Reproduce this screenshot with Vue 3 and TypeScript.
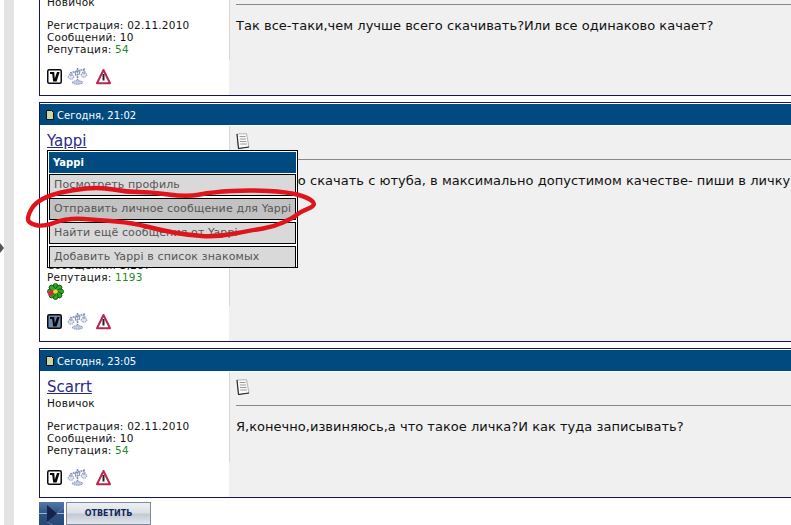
<script setup lang="ts">
interface Post {
  date: string
  name: string
  rank: string
  reg: string
  count: string
  rep: string
  text: string
  icq: boolean
  dark: boolean
}

const posts: Post[] = [
  { date: 'Сегодня, 20:47', name: 'Scarrt', rank: 'Новичок', reg: '02.11.2010', count: '10', rep: '54', text: 'Так все-таки,чем лучше всего скачивать?Или все одинаково качает?', icq: false, dark: false },
  { date: 'Сегодня, 21:02', name: 'Yappi', rank: 'Профи', reg: '14.03.2007', count: '3,287', rep: '1193', text: 'Если надо скачать с ютуба, в максимально допустимом качестве- пиши в личку', icq: true, dark: true },
  { date: 'Сегодня, 23:05', name: 'Scarrt', rank: 'Новичок', reg: '02.11.2010', count: '10', rep: '54', text: 'Я,конечно,извиняюсь,а что такое личка?И как туда записывать?', icq: false, dark: false },
]

const menu = [
  { label: 'Посмотреть профиль', active: false },
  { label: 'Отправить личное сообщение для Yappi', active: true },
  { label: 'Найти ещё сообщения от Yappi', active: false },
  { label: 'Добавить Yappi в список знакомых', active: false },
]

const loop: [number, number][] = [
  [72, 14], [100, 11], [127, 16], [150, 16], [187, 21], [213, 16], [250, 14], [287, 16],
  [307, 21], [317, 29], [300, 36], [293, 42], [273, 51], [253, 54], [217, 61], [187, 59],
  [160, 54], [133, 47], [100, 44], [67, 42], [43, 51], [28, 47], [28, 39], [35, 27], [50, 19],
]

function smooth(points: [number, number][]): string {
  const mid = (a: [number, number], b: [number, number]) => `${(a[0] + b[0]) / 2} ${(a[1] + b[1]) / 2}`
  let d = `M${mid(points[points.length - 1], points[0])}`
  points.forEach((p, i) => {
    d += `Q${p[0]} ${p[1]} ${mid(p, points[(i + 1) % points.length])}`
  })
  return d + 'Z'
}

const loopPath = smooth(loop)
</script>

<template>
  <div class="page">
    <div class="gutter"><span class="arrow"></span></div>
    <main class="thread">
      <article v-for="(p, i) in posts" :key="i" class="post" :class="'post' + i">
        <header class="post-head">
          <svg class="note" width="8" height="10" viewBox="0 0 8 10">
            <path d="M.5.5H5.5L7.5 2.5V9.5H.5Z" fill="#c6d6a4" stroke="#111" />
          </svg>
          <span>{{ p.date }}</span>
        </header>
        <div class="post-body">
          <aside class="author">
            <a class="name">{{ p.name }}</a>
            <div class="rank">{{ p.rank }}</div>
            <div class="stats" :class="{ tall: p.icq }">
              <div>Регистрация: {{ p.reg }}</div>
              <div>Сообщений: {{ p.count }}</div>
              <div>Репутация: <span class="rep">{{ p.rep }}</span></div>
            </div>
            <svg v-if="p.icq" class="icq" width="17" height="17" viewBox="0 0 18 18">
              <g fill="#33a81f" stroke="#0b4f10" stroke-width=".9">
                <ellipse v-for="a in [0, 45, 90, 135, 180, 225, 270, 315]" :key="a" cx="9" cy="4" rx="2.7" ry="3.6" :transform="`rotate(${a} 9 9)`" />
              </g>
              <ellipse cx="9" cy="4" rx="2.7" ry="3.4" fill="#d8263a" transform="rotate(250 9 9)" />
              <circle cx="9" cy="9" r="2.5" fill="#e8d640" />
            </svg>
            <div class="tools" :class="{ afterIcq: p.icq }">
              <svg width="15" height="15" viewBox="0 0 15 15">
                <rect x=".75" y=".75" width="13.5" height="13.5" rx="1.5" :fill="p.dark ? '#6d8bb0' : '#fff'" stroke="#0a0a0a" stroke-width="1.5" />
                <path d="M3 3H7.2L7.8 9.5L10 3H12.6L9.6 12.4H6.2L5.2 5H3Z" fill="#050505" />
              </svg>
              <svg width="21" height="18" viewBox="0 0 21 18" fill="none">
                <path d="M10.5 1V13M3 6L18 2" stroke="#7f8cb0" stroke-width="1.6" stroke-dasharray="2 .7" />
                <path d="M1 10L4 5L7 10C6 13 2 13 1 10ZM14 8L17 3L20 8C19 11 15 11 14 8Z" fill="#dde3f0" stroke="#8a96b8" stroke-dasharray="1.6 .6" />
                <path d="M5 15.5C7 13 14 13 16 15.5C14 17.8 7 17.8 5 15.5Z" fill="#c3cce0" stroke="#8a96b8" stroke-dasharray="1.6 .6" />
                <path d="M8 5L9 9M13 4L12 8M3 8H5M16 6H18" stroke="#5d6a90" stroke-width=".8" />
              </svg>
              <svg class="warn" width="15" height="17" viewBox="0 0 15 17">
                <path d="M7.5 2L14 15.2H1Z" fill="#fff" stroke="#b8274f" stroke-width="2" stroke-linejoin="round" />
                <path d="M7.5 6V12.5" stroke="#222" stroke-width="2" />
              </svg>
            </div>
          </aside>
          <section class="message">
            <div class="message-inner">
              <svg class="page-icon" width="14" height="16" viewBox="0 0 14 16">
                <path d="M1 1L10.5 .7L13 14L2.5 15.5Z" fill="#fafafa" stroke="#999" stroke-width=".7" />
                <path d="M1 1L2.5 15.5L13 14" fill="none" stroke="#222" stroke-width="1.1" />
                <path d="M3.5 3.5H9.5M3.8 6H10M4 8.5H10.5M4.3 11H11" stroke="#9a9a9a" />
              </svg>
              <hr class="rule" />
              <p class="text">{{ p.text }}</p>
            </div>
          </section>
        </div>
      </article>

      <button class="reply">
        <span class="reply-play">
          <svg width="25" height="23" viewBox="0 0 25 23">
            <path d="M0 11.5H25" stroke="#9fb3d0" />
            <path d="M8 3L18 11.5L8 20Z" fill="#14244a" />
            <path d="M18 11.5L25 5M8 20L14 23" stroke="#6f8ab0" stroke-width=".7" />
          </svg>
        </span>
        <span class="reply-label">ОТВЕТИТЬ</span>
      </button>

      <nav class="popup">
        <div class="popup-head">Yappi</div>
        <div v-for="m in menu" :key="m.label" class="popup-item" :class="{ active: m.active }">{{ m.label }}</div>
      </nav>

      <svg class="scribble" width="330" height="70" viewBox="0 0 330 70" fill="none">
        <path :d="loopPath" stroke="#e0141c" stroke-width="4.4" stroke-linejoin="round" />
      </svg>
    </main>
  </div>
</template>

<style>
html, body { margin: 0; background: #fff; overflow: hidden; }
</style>

<style scoped>
.page {
  display: flex;
  width: 791px;
  height: 525px;
  overflow: hidden;
  font-family: "DejaVu Sans", Verdana, sans-serif;
  color: #111;
}
.gutter {
  position: relative;
  flex: 0 0 10px;
  margin-left: 4px;
  background: #e4e4e4;
}
.arrow {
  position: absolute;
  left: -4px;
  top: 243px;
  border-left: 4px solid #555;
  border-top: 5px solid transparent;
  border-bottom: 5px solid transparent;
}
.thread {
  position: relative;
  flex: 0 0 800px;
  margin-left: 25px;
  margin-top: -53px;
  display: flex;
  flex-direction: column;
  gap: 6px;
}
.post {
  box-sizing: border-box;
  height: 149px;
  border: 1px solid #14145a;
  padding-top: 1px;
  flex: none;
}
.post1 { height: 240px; }
.post2 { height: 150px; }
.post-head {
  box-sizing: border-box;
  height: 21px;
  background: #004a80;
  color: #fff;
  font-size: 10px;
  padding: 1px 0 0 6px;
  display: flex;
  align-items: center;
  gap: 3px;
}
.post-body {
  display: flex;
  height: calc(100% - 22px);
  margin-top: 1px;
}
.author {
  flex: 0 0 189px;
  box-sizing: border-box;
  padding: 6px 0 0 7px;
  font-size: 10.5px;
  line-height: 12px;
  letter-spacing: 0.22px;
}
.name {
  display: block;
  font-size: 15px;
  line-height: 19px;
  color: #2a2a85;
  text-decoration: underline;
  letter-spacing: 0;
}
.stats { margin-top: 11px; }
.stats.tall { margin-top: 84px; }
.rep { color: #1f8a1f; }
.icq { display: block; }
.tools {
  display: flex;
  align-items: center;
  gap: 5px;
  margin-top: 12px;
}
.tools.afterIcq { margin-top: 12px; }
.warn { margin-left: 3px; }
.message {
  flex: 1;
  background: #f0f0f0;
}
.message-inner {
  border-left: 1px solid #d8d8d8;
  box-sizing: border-box;
  height: calc(100% - 35px);
  padding: 7px 0 0 6px;
}
.page-icon { display: block; }
.rule {
  margin: 10px 0 0;
  border: 0;
  border-top: 1px solid #888;
}
.text {
  margin: 13px 0 0;
  font-size: 13px;
  line-height: 16px;
  white-space: nowrap;
  letter-spacing: 0.02px;
}
.reply {
  flex: none;
  width: 112px;
  height: 23px;
  margin-top: -2px;
  padding: 0;
  border: 0;
  background: #fff;
  display: flex;
  gap: 2px;
  font-family: "DejaVu Sans", sans-serif;
}
.reply-play {
  width: 25px;
  height: 23px;
  background: linear-gradient(#5478a6, #2f5286 50%, #274873);
  display: flex;
}
.reply-label {
  flex: 1;
  box-sizing: border-box;
  border: 1px solid #7d8a9c;
  height: 23px;
  background: linear-gradient(#eef1f4, #dbe0e6 45%, #c2cbd4 55%, #e3e7eb);
  color: #14285c;
  font-size: 8px;
  font-weight: 700;
  line-height: 21px;
  text-align: center;
}
.popup {
  position: absolute;
  left: 8px;
  top: 203px;
  width: 251px;
  height: 118px;
  box-sizing: border-box;
  border: 1px solid #000;
  background: #fff;
  padding: 1px;
  display: flex;
  flex-direction: column;
  gap: 2px;
}
.popup-head {
  flex: 0 0 21px;
  margin-bottom: -1px;
  background: #004a80;
  color: #fff;
  font-size: 10px;
  font-weight: 700;
  line-height: 21px;
  padding-left: 4px;
}
.popup-item {
  flex: 1;
  box-sizing: border-box;
  border: 1px solid #000;
  background: #d9d9d9;
  color: #555;
  font-size: 11px;
  letter-spacing: 0.13px;
  line-height: 20px;
  padding-left: 4px;
  white-space: nowrap;
}
.popup-item.active { background: #c2c2c2; }
.scribble {
  position: absolute;
  left: -39px;
  top: 229px;
}
</style>
